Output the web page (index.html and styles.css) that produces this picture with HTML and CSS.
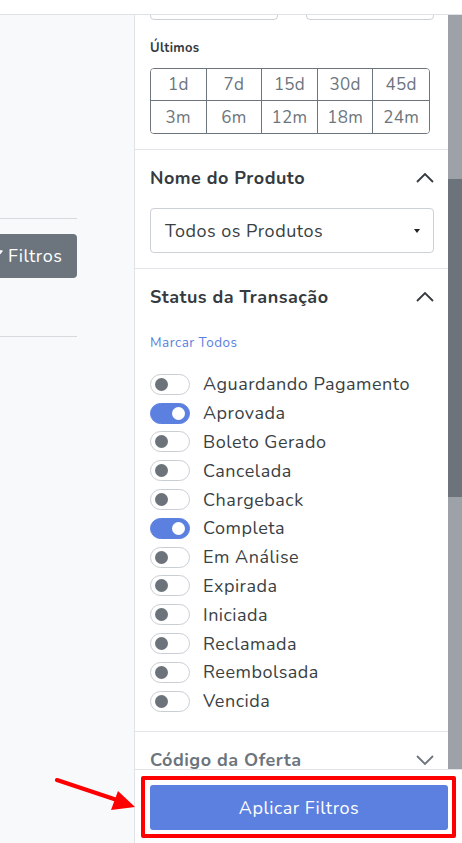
FILE: index.html
```html
<!DOCTYPE html>
<html lang="pt">
<head>
    <meta charset="UTF-8">
    <meta name="viewport" content="width=device-width, initial-scale=1.0">
    <title>Filtros de Vendas</title>
    <link rel="stylesheet" href="styles.css">
</head>
<body>
    <div class="topbar"></div>

    <div class="page">
        <!-- area da listagem (cortada) -->
        <div class="main">
            <div class="main-bar">
                <button class="btn-filtros">
                    <svg width="14" height="14" viewBox="0 0 14 14"><path d="M1 2h12l-4.5 5.5v5l-3-1.5v-3.5z" fill="none" stroke="#fff" stroke-width="1.4" stroke-linejoin="round"/></svg>
                    Filtros
                </button>
            </div>
        </div>

        <!-- painel lateral de filtros -->
        <aside class="sidebar">
            <div class="sidebar-body">
                <div class="sidebar-scroll">
                    <div class="section periodo">
                        <div class="datas">
                            <div class="data-input"></div>
                            <div class="data-input"></div>
                        </div>
                        <div class="sub-label">Últimos</div>
                        <div class="periodos">
                            <button>1d</button>
                            <button>7d</button>
                            <button>15d</button>
                            <button>30d</button>
                            <button>45d</button>
                            <button>3m</button>
                            <button>6m</button>
                            <button>12m</button>
                            <button>18m</button>
                            <button>24m</button>
                        </div>
                    </div>

                    <div class="section">
                        <div class="section-head">
                            <span>Nome do Produto</span>
                            <svg class="chevron" width="18" height="10" viewBox="0 0 18 10"><path d="M1 9l8-8 8 8" fill="none" stroke="#343a40" stroke-width="1.8"/></svg>
                        </div>
                        <div class="select">
                            <span>Todos os Produtos</span>
                            <span class="caret"></span>
                        </div>
                    </div>

                    <div class="section">
                        <div class="section-head">
                            <span>Status da Transação</span>
                            <svg class="chevron" width="18" height="10" viewBox="0 0 18 10"><path d="M1 9l8-8 8 8" fill="none" stroke="#343a40" stroke-width="1.8"/></svg>
                        </div>
                        <a class="marcar" href="#">Marcar Todos</a>
                        <ul class="status-list">
                            <li><span class="toggle"></span>Aguardando Pagamento</li>
                            <li><span class="toggle on"></span>Aprovada</li>
                            <li><span class="toggle"></span>Boleto Gerado</li>
                            <li><span class="toggle"></span>Cancelada</li>
                            <li><span class="toggle"></span>Chargeback</li>
                            <li><span class="toggle on"></span>Completa</li>
                            <li><span class="toggle"></span>Em Análise</li>
                            <li><span class="toggle"></span>Expirada</li>
                            <li><span class="toggle"></span>Iniciada</li>
                            <li><span class="toggle"></span>Reclamada</li>
                            <li><span class="toggle"></span>Reembolsada</li>
                            <li><span class="toggle"></span>Vencida</li>
                        </ul>
                    </div>

                    <div class="section">
                        <div class="section-head muted">
                            <span>Código da Oferta</span>
                            <svg class="chevron" width="18" height="10" viewBox="0 0 18 10"><path d="M1 1l8 8 8-8" fill="none" stroke="#6c757d" stroke-width="1.8"/></svg>
                        </div>
                    </div>
                </div>
                <div class="scrollbar"><div class="thumb"></div></div>
            </div>

            <div class="sidebar-footer">
                <button class="btn-aplicar">Aplicar Filtros</button>
            </div>
        </aside>
    </div>

    <!-- marcacao em vermelho do print -->
    <div class="destaque"></div>
    <svg class="seta" width="90" height="40" viewBox="0 0 90 40">
        <line x1="2" y1="3" x2="62" y2="23" stroke="#f00" stroke-width="4" stroke-linecap="round"/>
        <polygon points="80,30 56,33 63,14" fill="#f00"/>
    </svg>
</body>
</html>
```

FILE: styles.css
```css
body {
    font-family: "Nunito", "Noto Sans", sans-serif;
    margin: 0;
    padding: 0;
    width: 462px;
    height: 843px;
    overflow: hidden;
    background-color: #f8f9fb;
    color: #343a40;
    letter-spacing: 0.5px;
    position: relative;
}

.topbar {
    height: 15px;
    background-color: #fff;
    border-bottom: 1px solid #dfe2e6;
    box-sizing: border-box;
}

.page {
    display: flex;
    height: 828px;
}

/* area principal */
.main {
    width: 134px;
    border-right: 1px solid #dfe2e6;
    overflow: hidden;
}

.main-bar {
    width: 77px;
    margin-top: 203px;
    padding: 15px 0 58px;
    border-top: 1px solid #d6d9dd;
    border-bottom: 1px solid #d6d9dd;
}

.btn-filtros {
    display: flex;
    align-items: center;
    gap: 5px;
    width: 91px;
    height: 44px;
    margin-left: -14px;
    padding: 0 0 0 3px;
    border: none;
    border-radius: 0 4px 4px 0;
    background-color: #6c757d;
    color: #fff;
    font-family: inherit;
    font-size: 18px;
    letter-spacing: 0.5px;
}

/* painel lateral */
.sidebar {
    width: 327px;
    display: flex;
    flex-direction: column;
    background-color: #fff;
}

.sidebar-body {
    flex: 1;
    display: flex;
    overflow: hidden;
}

.sidebar-scroll {
    flex: 1;
    overflow: hidden;
}

.scrollbar {
    width: 14px;
    background-color: #9da2a8;
    padding-top: 164px;
}

.thumb {
    height: 318px;
    background-color: #6c737b;
}

.section {
    padding: 0 14px 0 15px;
    border-bottom: 1px solid #e2e5e8;
}

.periodo {
    padding-bottom: 15px;
}

.datas {
    display: flex;
    justify-content: space-between;
    margin-top: -30px;
}

.data-input {
    width: 126px;
    height: 33px;
    border: 1px solid #ccd1d7;
    border-radius: 4px;
}

.sub-label {
    font-size: 13px;
    font-weight: bold;
    margin-top: 19px;
    line-height: 18px;
    letter-spacing: 0.3px;
}

.periodos {
    display: grid;
    grid-template-columns: repeat(5, 1fr);
    width: 278px;
    margin-top: 11px;
    border: 1px solid #6c757d;
    border-radius: 4px;
    overflow: hidden;
}

.periodos button {
    height: 32px;
    border: none;
    border-right: 1px solid #6c757d;
    border-bottom: 1px solid #6c757d;
    background: #fff;
    color: #6c757d;
    font-family: inherit;
    font-size: 17px;
    letter-spacing: 0.3px;
    padding: 0;
}

.periodos button:nth-child(5n) {
    border-right: none;
}

.periodos button:nth-child(n+6) {
    border-bottom: none;
}

.section-head {
    display: flex;
    justify-content: space-between;
    align-items: center;
    height: 56px;
    font-size: 18px;
    font-weight: bold;
}

.section-head.muted {
    color: #6c757d;
}

.select {
    display: flex;
    justify-content: space-between;
    align-items: center;
    height: 43px;
    margin: 2px 0 15px;
    padding: 0 14px;
    border: 1px solid #ccd1d7;
    border-radius: 4px;
    font-size: 18px;
    color: #3a3f44;
}

.caret {
    border-left: 3px solid transparent;
    border-right: 3px solid transparent;
    border-top: 4px solid #222;
    margin-right: -1px;
}

.marcar {
    display: block;
    margin-top: 8px;
    font-size: 13.5px;
    color: #5b80e0;
    text-decoration: none;
}

.status-list {
    list-style: none;
    margin: 18px 0 0;
    padding: 0 0 15px;
}

.status-list li {
    display: flex;
    align-items: center;
    height: 28.8px;
    font-size: 18px;
    color: #3a3f44;
}

.toggle {
    position: relative;
    width: 38px;
    height: 19px;
    margin-right: 13px;
    border: 1px solid #c9ced4;
    border-radius: 11px;
    background-color: #fff;
}

.toggle::after {
    content: "";
    position: absolute;
    top: 3px;
    left: 4px;
    width: 13px;
    height: 13px;
    border-radius: 50%;
    background-color: #6c737b;
}

.toggle.on {
    background-color: #5b80e0;
    border-color: #5b80e0;
}

.toggle.on::after {
    left: auto;
    right: 4px;
    background-color: #fff;
}

.sidebar-footer {
    padding: 15px 14px 13px 15px;
    border-top: 1px solid #dfe2e6;
    background-color: #fff;
}

.btn-aplicar {
    display: block;
    width: 298px;
    height: 45px;
    border: none;
    border-radius: 3px;
    background-color: #5b80e0;
    color: #fff;
    font-family: inherit;
    font-size: 18px;
    letter-spacing: 0.5px;
}

/* marcacao do print */
.destaque {
    position: absolute;
    left: 141px;
    top: 776px;
    width: 307px;
    height: 54px;
    border: 4px solid #f00;
    border-radius: 2px;
}

.seta {
    position: absolute;
    left: 55px;
    top: 777px;
}
```
